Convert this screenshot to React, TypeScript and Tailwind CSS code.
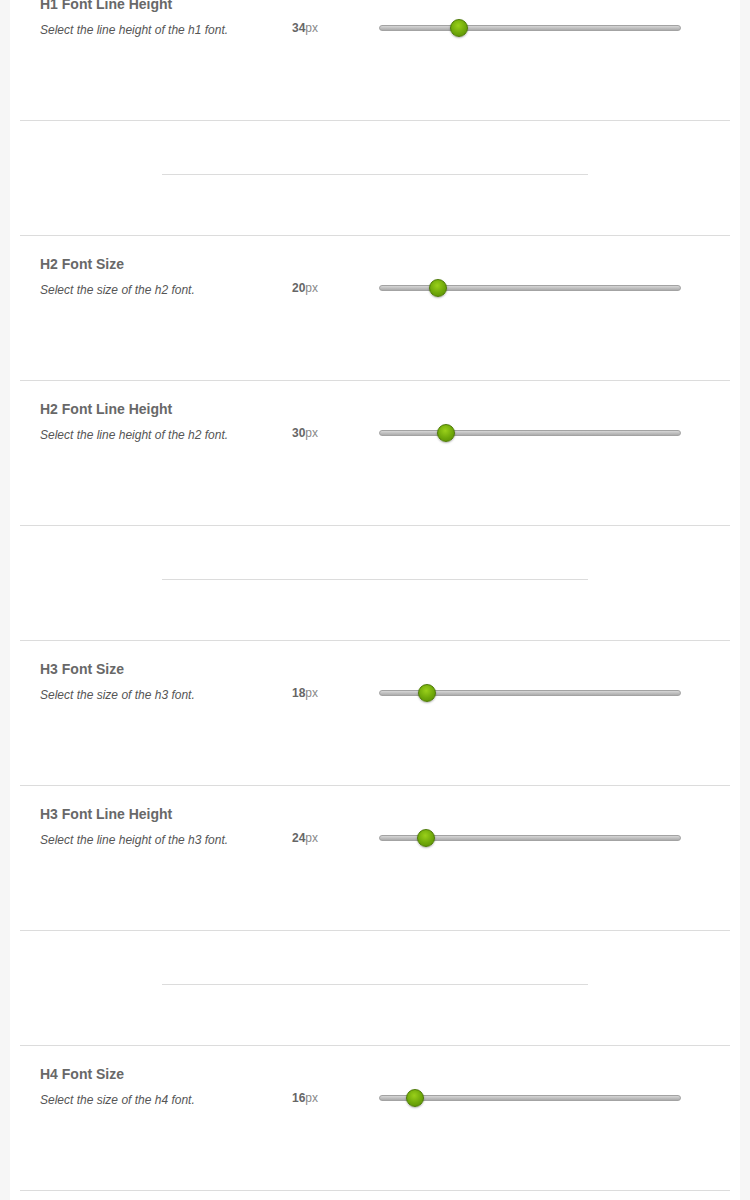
import React from 'react';

type Option = {
  kind: 'option';
  title: string;
  desc: string;
  value: number;
  knob: number; // knob left offset on the track, px
};

type Divider = { kind: 'divider' };

const ROWS: (Option | Divider)[] = [
  { kind: 'option', title: 'H1 Font Line Height', desc: 'Select the line height of the h1 font.', value: 34, knob: 71 },
  { kind: 'divider' },
  { kind: 'option', title: 'H2 Font Size', desc: 'Select the size of the h2 font.', value: 20, knob: 50 },
  { kind: 'option', title: 'H2 Font Line Height', desc: 'Select the line height of the h2 font.', value: 30, knob: 58 },
  { kind: 'divider' },
  { kind: 'option', title: 'H3 Font Size', desc: 'Select the size of the h3 font.', value: 18, knob: 39 },
  { kind: 'option', title: 'H3 Font Line Height', desc: 'Select the line height of the h3 font.', value: 24, knob: 38 },
  { kind: 'divider' },
  { kind: 'option', title: 'H4 Font Size', desc: 'Select the size of the h4 font.', value: 16, knob: 27 },
  { kind: 'divider' },
];

const Slider: React.FC<{ knob: number }> = ({ knob }) => (
  <div className="relative h-[18px] w-[302px]">
    <div className="absolute left-0 right-0 top-[6px] h-[6px] rounded-full border border-[#a3a3a3] bg-gradient-to-b from-[#d6d6d6] to-[#acacac]" />
    <div
      className="absolute top-0 h-[18px] w-[18px] rounded-full border border-[#4d7a05] bg-[radial-gradient(circle_at_45%_35%,#9ad01a,#6fa80a_55%,#568a00)] shadow-[0_1px_2px_rgba(0,0,0,0.3)]"
      style={{ left: knob }}
    />
  </div>
);

const OptionRow: React.FC<{ row: Option }> = ({ row }) => (
  <div className="h-[145px] border-b border-[#dcdcdc] px-[20px] pt-[20px]">
    <h3 className="text-[14px] font-bold leading-4 text-[#686868]">{row.title}</h3>
    <div className="mt-[7px] flex items-start">
      <p className="mt-[4px] w-[252px] text-[12px] italic leading-[14px] text-[#555]">{row.desc}</p>
      <div className="mt-[2px] w-[87px] text-[12px] leading-[14px] text-[#888]">
        <span className="font-bold text-[#666]">{row.value}</span>px
      </div>
      <Slider knob={row.knob} />
    </div>
  </div>
);

const DividerRow: React.FC = () => (
  <div className="h-[115px] border-b border-[#dcdcdc] pt-[53px]">
    <div className="mx-auto h-px w-[426px] bg-[#dcdcdc]" />
  </div>
);

export default function App() {
  return (
    <div className="h-[1200px] overflow-hidden bg-[#f6f6f6] font-['Liberation_Sans',Arial,sans-serif]">
      <div className="mx-[10px] -mt-[24px] bg-white px-[10px]">
        {ROWS.map((row, i) =>
          row.kind === 'option' ? <OptionRow key={i} row={row} /> : <DividerRow key={i} />
        )}
      </div>
    </div>
  );
}
